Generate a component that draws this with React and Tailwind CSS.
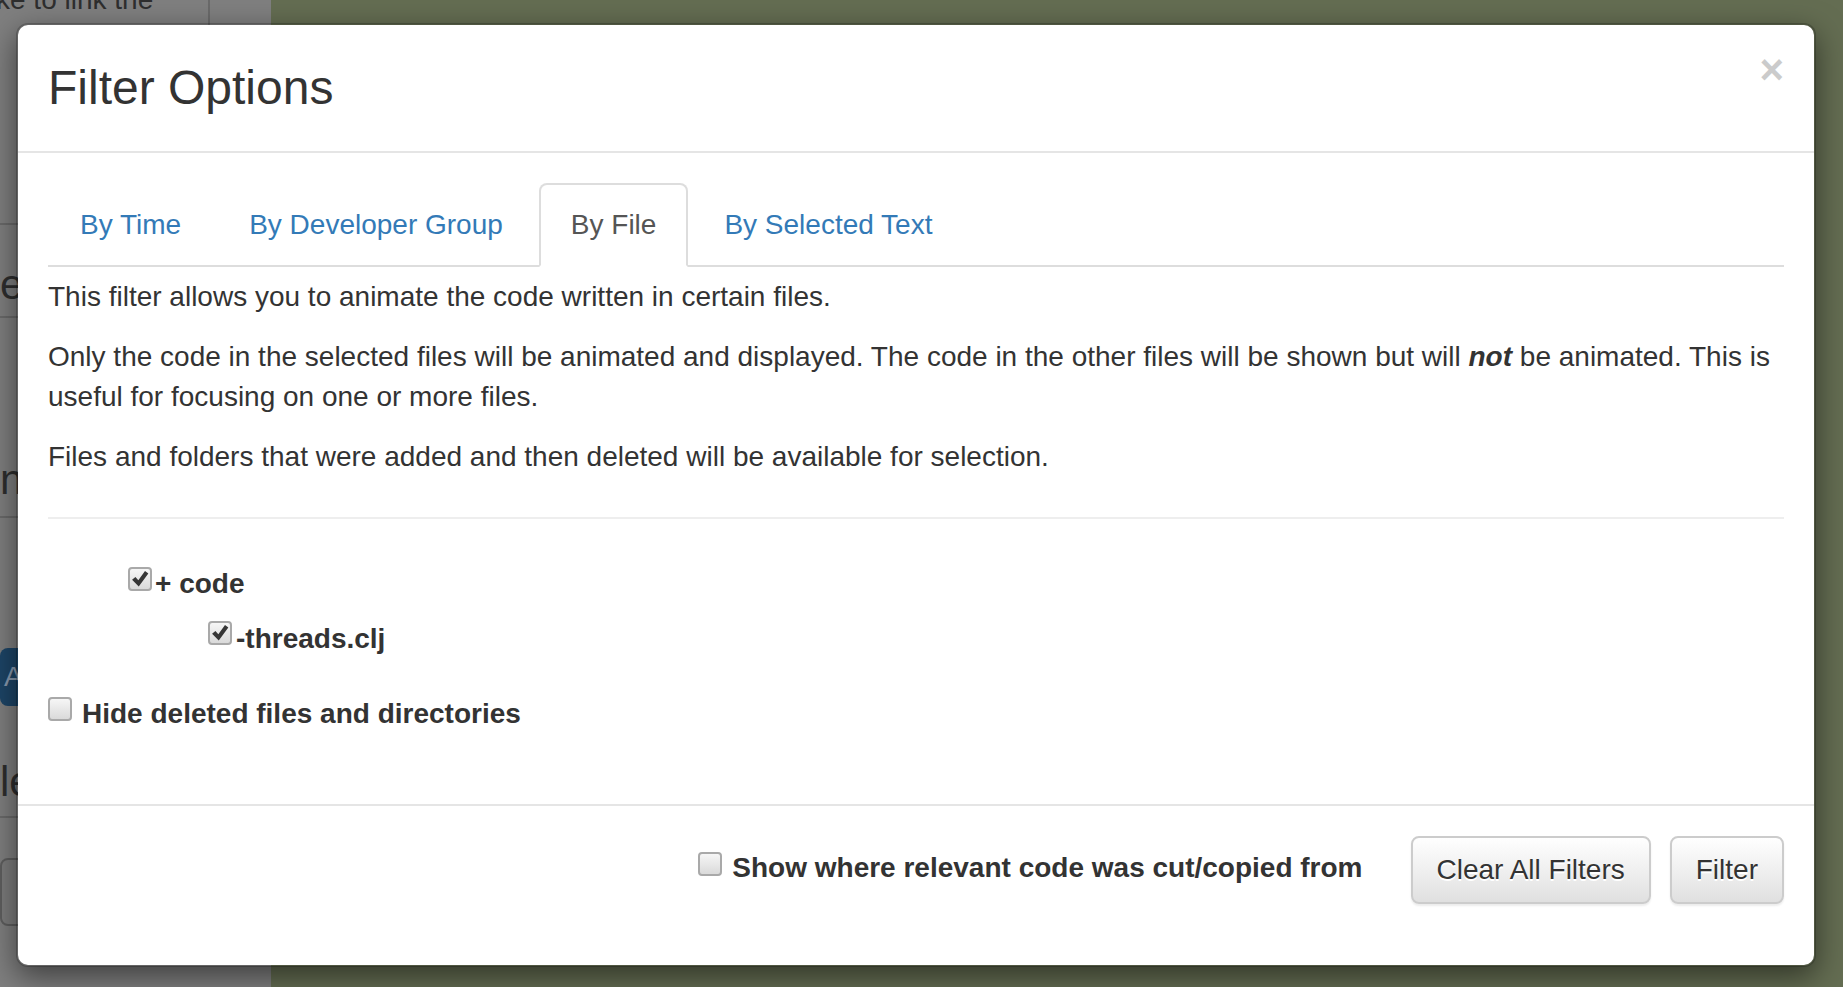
import React from 'react';

function Box({ checked, className = '' }) {
  return (
    <span
      className={`flex h-[24px] w-[24px] shrink-0 items-center justify-center rounded-[4px] border-2 border-[#a9a9a9] bg-gradient-to-b from-[#f6f6f6] to-[#dadada] ${className}`}
    >
      {checked && (
        <svg viewBox="0 0 24 24" className="h-[20px] w-[20px]">
          <path d="M2.5 13 L6.5 9.5 L10 13.5 L18 2.5 L22 5.5 L10.5 21 Z" fill="#363636" />
        </svg>
      )}
    </span>
  );
}

const tabs = ['By Time', 'By Developer Group', 'By File', 'By Selected Text'];

function Modal() {
  return (
    <div className="absolute left-[16px] top-[23px] flex w-[1800px] flex-col rounded-[12px] border-2 border-black/20 bg-white bg-clip-padding text-[#333] shadow-[0_10px_30px_rgba(0,0,0,0.5)]">
      {/* Header */}
      <div className="flex items-start justify-between border-b-2 border-[#e5e5e5] p-[30px]">
        <h3 className="text-[48px] font-normal leading-[66px]">Filter Options</h3>
        <button className="-mt-[6px] text-[42px] font-bold leading-[42px] text-black opacity-20">×</button>
      </div>

      {/* Body */}
      <div className="px-[30px] pb-[70px] pt-[30px] text-[28px] leading-[40px]">
        <div className="flex border-b-2 border-[#ddd]">
          {tabs.map((t) =>
            t === 'By File' ? (
              <div
                key={t}
                className="-mb-[2px] mr-[4px] rounded-t-[8px] border-2 border-[#ddd] border-b-transparent bg-white px-[30px] py-[20px] text-[#555]"
              >
                {t}
              </div>
            ) : (
              <div
                key={t}
                className="-mb-[2px] mr-[4px] rounded-t-[8px] border-2 border-transparent px-[30px] py-[20px] text-[#337ab7]"
              >
                {t}
              </div>
            )
          )}
        </div>

        <div className="pt-[10px]">
          <p className="mb-[20px]">This filter allows you to animate the code written in certain files.</p>
          <p className="mb-[20px]">
            Only the code in the selected files will be animated and displayed. The code in the other files will be shown but will{' '}
            <b className="italic">not</b> be animated. This is useful for focusing on one or more files.
          </p>
          <p>Files and folders that were added and then deleted will be available for selection.</p>

          <hr className="my-[40px] border-t-2 border-[#eee]" />

          {/* File tree */}
          <div className="pl-[80px] pt-[5px] font-bold">
            <label className="flex items-start gap-[3px]">
              <Box checked className="mt-[3px]" />
              <span>+ code</span>
            </label>
            <div className="mt-[15px] pl-[80px]">
              <label className="flex items-start gap-[4px]">
                <Box checked className="mt-[2px]" />
                <span>-threads.clj</span>
              </label>
            </div>
          </div>

          <label className="mt-[35px] flex items-start gap-[10px] font-bold">
            <Box className="mt-[3px]" />
            <span>Hide deleted files and directories</span>
          </label>
        </div>
      </div>

      {/* Footer */}
      <div className="flex items-start justify-end border-t-2 border-[#e5e5e5] px-[30px] pb-[61px] pt-[30px] text-[28px] leading-[40px]">
        <label className="mr-[48px] mt-[12px] flex items-start gap-[10px] font-bold">
          <Box className="mt-[4px]" />
          <span>Show where relevant code was cut/copied from</span>
        </label>
        <button className="rounded-[8px] border-2 border-[#ccc] bg-gradient-to-b from-white to-[#e0e0e0] px-[24px] py-[12px] text-[#333] shadow-[0_2px_2px_rgba(0,0,0,0.075)] [text-shadow:0_2px_0_#fff]">
          Clear All Filters
        </button>
        <button className="ml-[19px] rounded-[8px] border-2 border-[#ccc] bg-gradient-to-b from-white to-[#e0e0e0] px-[24px] py-[12px] text-[#333] shadow-[0_2px_2px_rgba(0,0,0,0.075)] [text-shadow:0_2px_0_#fff]">
          Filter
        </button>
      </div>
    </div>
  );
}

export default function App() {
  return (
    <div className="relative h-[987px] w-[1843px] overflow-hidden font-['Liberation_Sans',Arial,sans-serif]">
      <div className="flex h-full">
        {/* page behind the backdrop */}
        <div className="w-[271px] bg-[#7f7f7f] text-[#2e2e2e]">
          <div className="flex h-[225px] border-b-2 border-[#6a6a6a]">
            <div className="w-[210px] border-r-2 border-[#6a6a6a]">
              <div className="-ml-[4px] -mt-[20px] whitespace-nowrap text-[28px] leading-[40px]">ke to link the</div>
            </div>
          </div>
          <div className="h-[93px] border-b-2 border-[#6a6a6a] pt-[36px] text-[42px] leading-[48px]">edit</div>
          <div className="h-[200px] border-b-2 border-[#6a6a6a] pt-[138px] text-[42px] leading-[48px]">nfo</div>
          <div className="pt-[130px]">
            <div className="flex h-[58px] w-[120px] items-center rounded-[8px] bg-[#1d4567] pl-[4px] text-[28px] text-[#8a9bb0]">
              Apply
            </div>
          </div>
          <div className="h-[112px] border-b-2 border-[#6a6a6a] pt-[52px] text-[42px] leading-[48px]">lete</div>
          <div className="pt-[40px]">
            <div className="h-[68px] w-[140px] rounded-[8px] border-2 border-[#5e5e5e] bg-[#7c7c7c]" />
          </div>
        </div>
        <div className="flex-1 bg-[#646d52]" />
      </div>
      <Modal />
    </div>
  );
}
